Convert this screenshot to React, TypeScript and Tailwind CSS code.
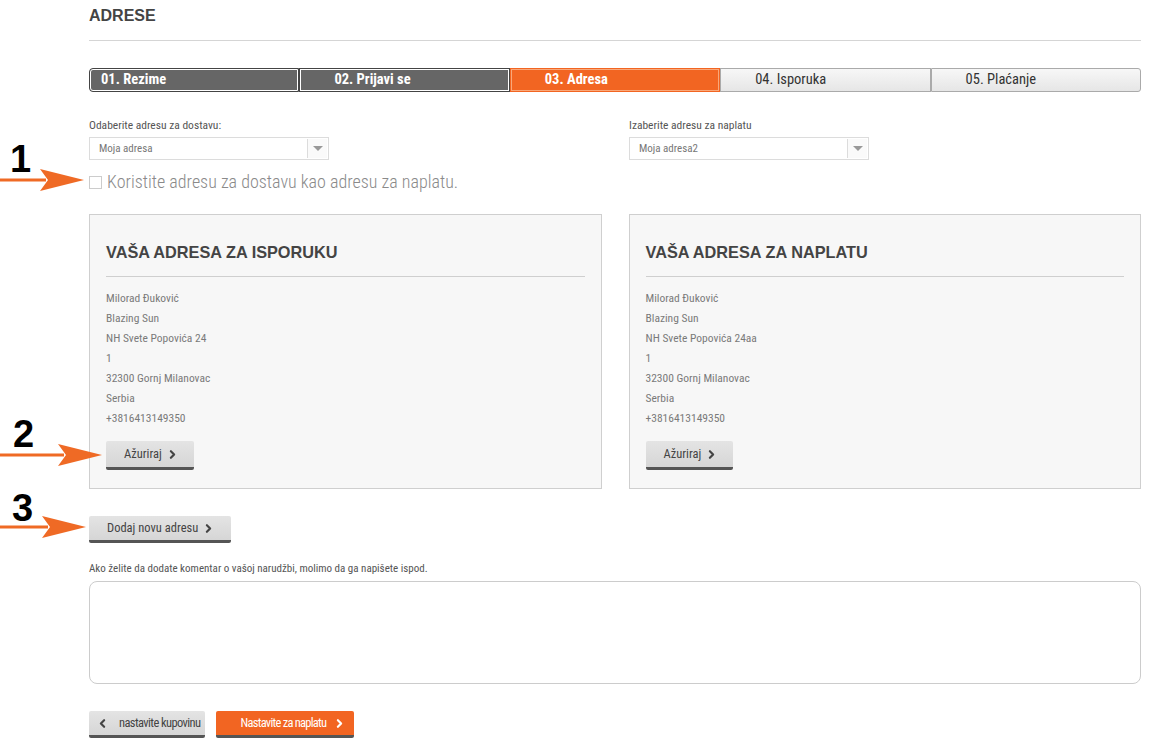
import { ChevronRight, ChevronLeft } from "lucide-react";

const COND = "font-['Roboto_Condensed',Roboto,sans-serif]";

const steps = [
  { label: "01. Rezime", kind: "done" },
  { label: "02. Prijavi se", kind: "done" },
  { label: "03. Adresa", kind: "active" },
  { label: "04. Isporuka", kind: "todo" },
  { label: "05. Plaćanje", kind: "todo" },
];

const shipping = [
  "Milorad Đuković",
  "Blazing Sun",
  "NH Svete Popovića 24",
  "1",
  "32300 Gornj Milanovac",
  "Serbia",
  "+3816413149350",
];

const billing = [
  "Milorad Đuković",
  "Blazing Sun",
  "NH Svete Popovića 24aa",
  "1",
  "32300 Gornj Milanovac",
  "Serbia",
  "+3816413149350",
];

function Arrow({ top, width }: { top: number; width: number }) {
  return (
    <svg
      className="absolute left-0"
      style={{ top, width }}
      height={24}
      viewBox={`0 0 ${width} 24`}
    >
      <rect x={0} y={10.5} width={width - 38} height={3} fill="#ef6a25" />
      <polygon points={`${width - 44},1 ${width},12 ${width - 44},23 ${width - 36},12`} fill="#ef6a25" />
    </svg>
  );
}

function Select({ value }: { value: string }) {
  return (
    <div className="flex h-[23px] w-[240px] border border-[#dcdcdc] bg-white">
      <div className={`flex-1 pl-[9px] text-[11px] leading-[21px] text-[#777] ${COND}`}>{value}</div>
      <div className="m-px flex w-[20px] items-center justify-center border-l border-[#dcdcdc] bg-[#fafafa]">
        <div className="h-0 w-0 border-x-[5px] border-t-[5px] border-x-transparent border-t-[#999]" />
      </div>
    </div>
  );
}

function GrayButton({ children }: { children: React.ReactNode }) {
  return (
    <button
      className={`flex items-center rounded-[2px] border-b-[3px] border-[#555] bg-gradient-to-b from-[#e4e4e4] to-[#d6d6d6] text-[12.5px] text-[#444] ${COND}`}
    >
      {children}
    </button>
  );
}

function AddressCard({ title, lines }: { title: string; lines: string[] }) {
  return (
    <div className="h-[275px] border border-[#cfcfcf] bg-[#f7f7f7] px-[16px] pt-[27px]">
      <h2 className="font-['Liberation_Sans',Arial,sans-serif] text-[16.3px] font-bold leading-[20px] text-[#444]">
        {title}
      </h2>
      <div className="mt-[14px] border-t border-[#cfcfcf]" />
      <div className={`mt-[11px] text-[11.5px] leading-[20px] text-[#7a7a7a] ${COND}`}>
        {lines.map((l, i) => (
          <div key={i}>{l}</div>
        ))}
      </div>
      <div className="mt-[13px]">
        <GrayButton>
          <span className="flex h-[26px] items-center pl-[18px] pr-[15px]">
            Ažuriraj
            <ChevronRight size={13} strokeWidth={4} className="ml-[4px] text-[#444]" />
          </span>
        </GrayButton>
      </div>
    </div>
  );
}

export default function App() {
  return (
    <div className="relative min-h-[749px] w-[1153px] bg-white font-['Liberation_Sans',Arial,sans-serif]">
      {/* annotations */}
      <div className="pointer-events-none absolute left-[10px] top-[140px] text-[38px] font-bold leading-none text-black">
        1
      </div>
      <Arrow top={168} width={84} />
      <div className="pointer-events-none absolute left-[13px] top-[415px] text-[38px] font-bold leading-none text-black">
        2
      </div>
      <Arrow top={443} width={102} />
      <div className="pointer-events-none absolute left-[12px] top-[489px] text-[38px] font-bold leading-none text-black">
        3
      </div>
      <Arrow top={515} width={86} />

      <div className="ml-[89px] w-[1052px]">
        <h1 className="pt-[7px] text-[16px] font-bold leading-[18px] text-[#444]">ADRESE</h1>
        <div className="mt-[15px] border-t border-[#d5d5d5]" />

        {/* steps */}
        <div className="mt-[27px] grid h-[21px] grid-cols-5">
          {steps.map((s, i) => (
            <div
              key={s.label}
              className={`flex items-center text-[14.5px] ${COND} ${
                s.kind === "done"
                  ? "border-[1.5px] border-[#444] bg-[#666] font-bold text-white outline outline-1 -outline-offset-[2.5px] outline-white"
                  : s.kind === "active"
                  ? "border border-[#f26522] bg-[#f26522] font-bold text-white outline outline-1 -outline-offset-2 outline-[#f9a87a]"
                  : "border border-[#aaa] bg-gradient-to-b from-[#f7f7f7] to-[#e6e6e6] text-[#333]"
              } ${i === 0 ? "rounded-l-[4px] pl-[11px]" : "pl-[34px]"} ${i === 4 ? "rounded-r-[3px]" : ""}`}
            >
              {s.label}
            </div>
          ))}
        </div>

        {/* selects */}
        <div className="mt-[29px] flex">
          <div className="w-[540px]">
            <div className={`text-[11.5px] leading-[14px] text-[#555] ${COND}`}>Odaberite adresu za dostavu:</div>
            <div className="mt-[5px]">
              <Select value="Moja adresa" />
            </div>
          </div>
          <div>
            <div className={`text-[11.5px] leading-[14px] text-[#555] ${COND}`}>Izaberite adresu za naplatu</div>
            <div className="mt-[5px]">
              <Select value="Moja adresa2" />
            </div>
          </div>
        </div>

        <label className="mt-[12px] flex items-center gap-[5px]">
          <span className="h-[13px] w-[13px] border border-[#ccc] bg-white" />
          <span className={`text-[18px] font-light leading-[20px] text-[#8a8a8a] ${COND}`}>
            Koristite adresu za dostavu kao adresu za naplatu.
          </span>
        </label>

        {/* cards */}
        <div className="mt-[22px] grid grid-cols-2 gap-[27px]">
          <AddressCard title="VAŠA ADRESA ZA ISPORUKU" lines={shipping} />
          <AddressCard title="VAŠA ADRESA ZA NAPLATU" lines={billing} />
        </div>

        <div className="mt-[27px]">
          <GrayButton>
            <span className="flex h-[24px] items-center pl-[18px] pr-[16px]">
              Dodaj novu adresu
              <ChevronRight size={13} strokeWidth={4} className="ml-[4px] text-[#444]" />
            </span>
          </GrayButton>
        </div>

        <div className={`mt-[19px] text-[11px] leading-[14px] text-[#555] ${COND}`}>
          Ako želite da dodate komentar o vašoj narudžbi, molimo da ga napišete ispod.
        </div>
        <textarea className="mt-[5px] block h-[103px] w-full resize-none rounded-[8px] border border-[#ccc] bg-white" />

        <div className="mt-[27px] flex gap-[11px]">
          <button
            className={`flex h-[27px] items-center rounded-[2px] border-b-[3px] border-[#555] bg-gradient-to-b from-[#e4e4e4] to-[#d6d6d6] pl-[7px] pr-[4px] text-[12.5px] tracking-[-0.6px] text-[#444] ${COND}`}
          >
            <ChevronLeft size={13} strokeWidth={4} className="mr-[10px] text-[#444]" />
            nastavite kupovinu
          </button>
          <button
            className={`flex h-[27px] items-center rounded-[2px] border-b-[3px] border-[#555] bg-[#f26522] pl-[25px] pr-[8px] text-[12.5px] tracking-[-0.75px] text-white ${COND}`}
          >
            Nastavite za naplatu
            <ChevronRight size={13} strokeWidth={4} className="ml-[7px] text-white" />
          </button>
        </div>
      </div>
    </div>
  );
}
